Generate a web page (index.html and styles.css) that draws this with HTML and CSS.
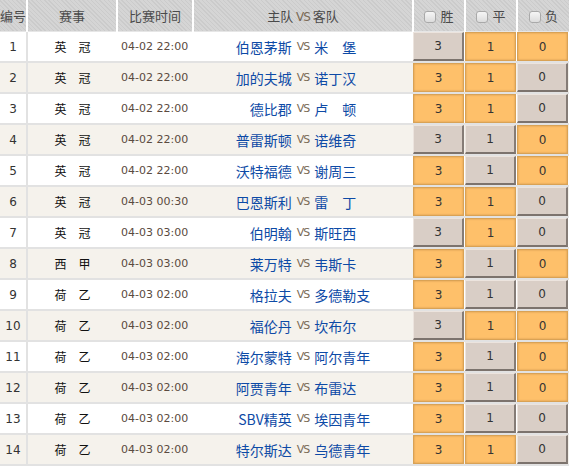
FILE: index.html
```html
<!DOCTYPE html>
<html lang="zh">
<head>
<meta charset="utf-8">
<link rel="stylesheet" href="styles.css">
</head>
<body>
<table class="grid">
  <colgroup>
    <col class="c-no"><col class="c-lg"><col class="c-time"><col class="c-team"><col class="c-bt"><col class="c-bt"><col class="c-bt">
  </colgroup>
  <thead>
    <tr>
      <th>编号</th><th>赛事</th><th>比赛时间</th><th>主队 <span class="vs">VS</span> 客队</th>
      <th><span class="chk"></span>胜</th><th><span class="chk"></span>平</th><th><span class="chk"></span>负</th>
    </tr>
  </thead>
  <tbody>
    <tr><td class="no">1</td><td class="lg">英　冠</td><td class="tm">04-02 22:00</td><td class="teams"><div class="vsrow"><span class="home">伯恩茅斯</span><span class="vs">VS</span><span class="away">米　堡</span></div></td><td><div class="b">3</div></td><td><div class="b on">1</div></td><td><div class="b on">0</div></td></tr>
    <tr><td class="no">2</td><td class="lg">英　冠</td><td class="tm">04-02 22:00</td><td class="teams"><div class="vsrow"><span class="home">加的夫城</span><span class="vs">VS</span><span class="away">诺丁汉</span></div></td><td><div class="b on">3</div></td><td><div class="b on">1</div></td><td><div class="b">0</div></td></tr>
    <tr><td class="no">3</td><td class="lg">英　冠</td><td class="tm">04-02 22:00</td><td class="teams"><div class="vsrow"><span class="home">德比郡</span><span class="vs">VS</span><span class="away">卢　顿</span></div></td><td><div class="b on">3</div></td><td><div class="b on">1</div></td><td><div class="b">0</div></td></tr>
    <tr><td class="no">4</td><td class="lg">英　冠</td><td class="tm">04-02 22:00</td><td class="teams"><div class="vsrow"><span class="home">普雷斯顿</span><span class="vs">VS</span><span class="away">诺维奇</span></div></td><td><div class="b">3</div></td><td><div class="b">1</div></td><td><div class="b on">0</div></td></tr>
    <tr><td class="no">5</td><td class="lg">英　冠</td><td class="tm">04-02 22:00</td><td class="teams"><div class="vsrow"><span class="home">沃特福德</span><span class="vs">VS</span><span class="away">谢周三</span></div></td><td><div class="b on">3</div></td><td><div class="b">1</div></td><td><div class="b on">0</div></td></tr>
    <tr><td class="no">6</td><td class="lg">英　冠</td><td class="tm">04-03 00:30</td><td class="teams"><div class="vsrow"><span class="home">巴恩斯利</span><span class="vs">VS</span><span class="away">雷　丁</span></div></td><td><div class="b on">3</div></td><td><div class="b on">1</div></td><td><div class="b">0</div></td></tr>
    <tr><td class="no">7</td><td class="lg">英　冠</td><td class="tm">04-03 03:00</td><td class="teams"><div class="vsrow"><span class="home">伯明翰</span><span class="vs">VS</span><span class="away">斯旺西</span></div></td><td><div class="b">3</div></td><td><div class="b on">1</div></td><td><div class="b">0</div></td></tr>
    <tr><td class="no">8</td><td class="lg">西　甲</td><td class="tm">04-03 03:00</td><td class="teams"><div class="vsrow"><span class="home">莱万特</span><span class="vs">VS</span><span class="away">韦斯卡</span></div></td><td><div class="b on">3</div></td><td><div class="b">1</div></td><td><div class="b on">0</div></td></tr>
    <tr><td class="no">9</td><td class="lg">荷　乙</td><td class="tm">04-03 02:00</td><td class="teams"><div class="vsrow"><span class="home">格拉夫</span><span class="vs">VS</span><span class="away">多德勒支</span></div></td><td><div class="b on">3</div></td><td><div class="b">1</div></td><td><div class="b">0</div></td></tr>
    <tr><td class="no">10</td><td class="lg">荷　乙</td><td class="tm">04-03 02:00</td><td class="teams"><div class="vsrow"><span class="home">福伦丹</span><span class="vs">VS</span><span class="away">坎布尔</span></div></td><td><div class="b">3</div></td><td><div class="b on">1</div></td><td><div class="b on">0</div></td></tr>
    <tr><td class="no">11</td><td class="lg">荷　乙</td><td class="tm">04-03 02:00</td><td class="teams"><div class="vsrow"><span class="home">海尔蒙特</span><span class="vs">VS</span><span class="away">阿尔青年</span></div></td><td><div class="b on">3</div></td><td><div class="b">1</div></td><td><div class="b on">0</div></td></tr>
    <tr><td class="no">12</td><td class="lg">荷　乙</td><td class="tm">04-03 02:00</td><td class="teams"><div class="vsrow"><span class="home">阿贾青年</span><span class="vs">VS</span><span class="away">布雷达</span></div></td><td><div class="b on">3</div></td><td><div class="b">1</div></td><td><div class="b on">0</div></td></tr>
    <tr><td class="no">13</td><td class="lg">荷　乙</td><td class="tm">04-03 02:00</td><td class="teams"><div class="vsrow"><span class="home">SBV精英</span><span class="vs">VS</span><span class="away">埃因青年</span></div></td><td><div class="b on">3</div></td><td><div class="b">1</div></td><td><div class="b">0</div></td></tr>
    <tr><td class="no">14</td><td class="lg">荷　乙</td><td class="tm">04-03 02:00</td><td class="teams"><div class="vsrow"><span class="home">特尔斯达</span><span class="vs">VS</span><span class="away">乌德青年</span></div></td><td><div class="b on">3</div></td><td><div class="b on">1</div></td><td><div class="b">0</div></td></tr>
  </tbody>
</table>
</body>
</html>
```

FILE: styles.css
```css
html, body {
  margin: 0;
  padding: 0;
  background: #fff;
}
body {
  font-family: "DejaVu Sans", "Noto Sans CJK SC", sans-serif;
  font-size: 12px;
  color: #333;
}
.grid {
  border-collapse: collapse;
  table-layout: fixed;
  width: 569px;
}
.c-no { width: 27px; }
.c-lg { width: 90px; }
.c-time { width: 76px; }
.c-team { width: 220px; }
.c-bt { width: 52px; }

thead th {
  height: 31px;
  padding: 0;
  font-weight: normal;
  font-size: 13px;
  color: #4a4a4a;
  text-align: center;
  font-family: "Noto Sans CJK SC", sans-serif;
  background: repeating-linear-gradient(45deg, #cbcbcb 0 1px, #d5d5d5 1px 3px);
  border-left: 2px solid #fff;
  border-bottom: 1px solid #e6e6e6;
}
thead th:first-child { border-left: 0; }
thead .vs {
  font-family: "DejaVu Sans", sans-serif;
  font-size: 12px;
  color: #7a6a55;
  letter-spacing: -1px;
}
.chk {
  display: inline-block;
  box-sizing: border-box;
  width: 12px;
  height: 12px;
  margin-right: 4px;
  vertical-align: -2px;
  border: 1px solid #a9a9a9;
  border-radius: 3px;
  background: linear-gradient(#f6f6f6, #dcdcdc);
}
tbody td {
  height: 29px;
  padding: 0;
  text-align: center;
  border-bottom: 2px solid #e2e2e2;
}
tbody tr:nth-child(even) td { background: #f5f2ec; }
tbody tr:nth-child(odd) td { background: #fff; }
td.no {
  border-right: 2px solid #e2e2e2;
  color: #333;
  font-size: 12px;
}
td.lg {
  font-family: "Noto Sans CJK SC", sans-serif;
  font-size: 12px;
  color: #111;
}
td.tm {
  font-size: 11px;
  color: #5a4a40;
  text-align: left;
  padding-left: 4px;
}
.vsrow {
  display: flex;
  align-items: center;
}
.home, .away {
  flex: 1;
  font-family: "Noto Sans CJK SC", sans-serif;
  font-size: 14px;
  color: #0d4aa6;
}
.home { text-align: right; }
.away { text-align: left; }
.vsrow .vs {
  margin: 0 5px;
  font-size: 11px;
  color: #7a6a55;
  letter-spacing: -1px;
}
.b {
  box-sizing: border-box;
  height: 29px;
  margin-right: 1px;
  display: flex;
  align-items: center;
  justify-content: center;
  font-size: 12px;
  color: #333;
  background: #d9cec6;
  border-top: 1px solid #ece4de;
  border-left: 1px solid #ece4de;
  border-right: 2px solid #857c76;
  border-bottom: 2px solid #7c736d;
}
.b.on {
  background: #fec06a;
  border: 1px solid #d9a255;
  box-shadow: inset 0 0 2px #c8904a;
}
```
